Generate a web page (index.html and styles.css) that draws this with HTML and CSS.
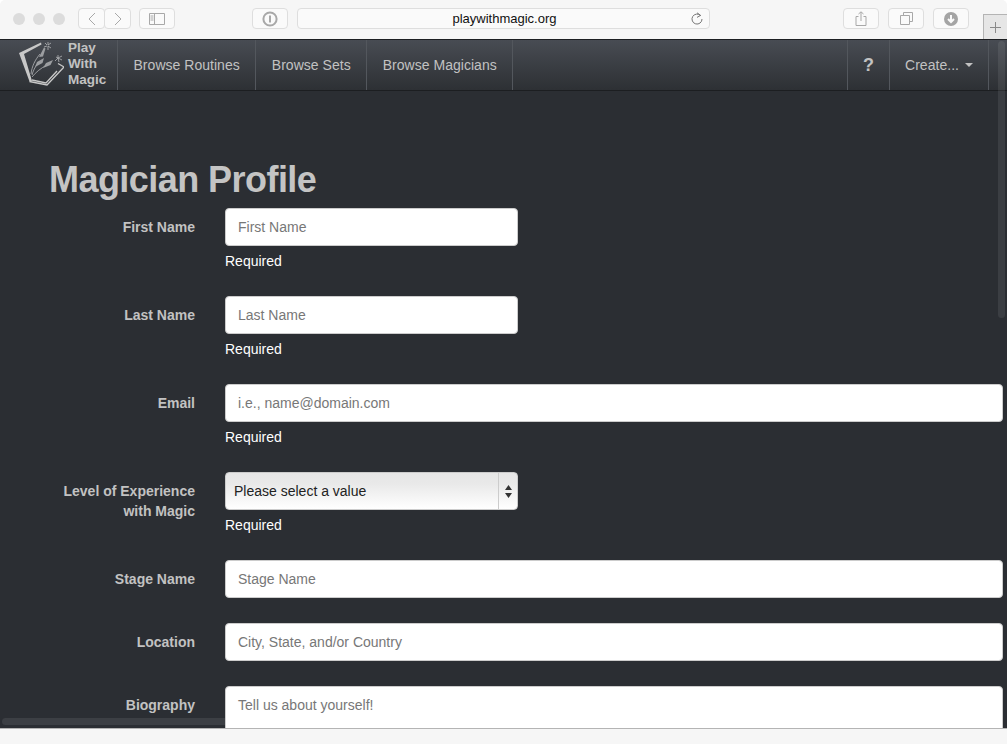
FILE: index.html
```html
<!DOCTYPE html>
<html lang="en">
<head>
  <meta charset="UTF-8">
  <title>Play With Magic</title>
  <link rel="stylesheet" href="styles.css">
</head>
<body>
  <div class="toolbar">
    <div class="lights"><span></span><span></span><span></span></div>
    <div class="btn-pair">
      <button class="tool-btn nav-btn"><svg width="12" height="14" viewBox="0 0 12 14"><path d="M9 1L3 7l6 6" /></svg></button>
      <button class="tool-btn nav-btn"><svg width="12" height="14" viewBox="0 0 12 14"><path d="M3 1l6 6-6 6" /></svg></button>
    </div>
    <button class="tool-btn wide sidebar-btn"><svg width="16" height="12" viewBox="0 0 16 12"><path d="M.5.5h15v11H.5zM5.5.5v11M1.5 3h3M1.5 5h3M1.5 7h3" /></svg></button>
    <button class="tool-btn wide pw-btn"><svg width="16" height="16" viewBox="0 0 16 16"><circle cx="8" cy="8" r="6.6" class="thick" /><path d="M8 4.5v7" class="thick" /></svg></button>
    <div class="url-bar">
      <span class="url-text">playwithmagic.org</span>
      <svg class="reload" width="12" height="14" viewBox="0 0 12 14"><path d="M9.6 3.6A5 5 0 1 0 11 7M6 .8l3.6 2.6L6 5.4" /></svg>
    </div>
    <div class="right-tools">
      <button class="tool-btn wide"><svg width="12" height="15" viewBox="0 0 12 15"><path d="M3.5 5.5H1v9h10v-9H8.500M6 10V1M3.500 3L6 .8 8.500 3" /></svg></button>
      <button class="tool-btn wide"><svg width="13" height="13" viewBox="0 0 13 13"><path d="M.5 3.500h9v9h-9zM3.500 3.500v-3h9v9h-3" /></svg></button>
      <button class="tool-btn wide"><svg width="14" height="14" viewBox="0 0 14 14"><circle cx="7" cy="7" r="7" class="solid" /><path d="M7 3v6.500M4 7l3 3 3-3" class="cut" /></svg></button>
    </div>
    <div class="new-tab"><svg width="11" height="11" viewBox="0 0 11 11"><path d="M5.500 0v11M0 5.500h11" /></svg></div>
  </div>

  <div class="viewport">
    <nav class="navbar">
      <a class="brand" href="#">
        <svg class="logo" width="46" height="50" viewBox="0 0 46 50">
          <path class="logo-cover" d="M1 13L23 2.500l.5 2L6 14l8 27-2.500.5z" />
          <path class="logo-line" d="M11.500 41.500L29 45l17-18-6-3.500M14 40l14 3L39 31" />
          <path class="logo-stem" d="M13 34c1-8 4-14 9-20M14 35c1-4 3-8 6-12M14 37c4-5 9-9 15-12" />
          <path class="logo-cone" d="M21 17l5-9.500 1.500 1-2.500 8zM17 27l2-5 7-4-1.500 5zM25 28l3-5 7-3-2.500 5z" />
          <path class="logo-dots" d="M27 3l2 2M30 2v3M33 3l-3 2M26 7l3-1M30 6v4M33 8l-3-2M38 17l2 1M40 15v3M44 16l-4 2M37 21l3-3M41 22l-1-4M44 20l-4-2" />
        </svg>
        <span class="brand-text">Play<br>With<br>Magic</span>
      </a>
      <a class="nav-link" href="#">Browse Routines</a>
      <a class="nav-link" href="#">Browse Sets</a>
      <a class="nav-link" href="#">Browse Magicians</a>
      <a class="nav-link help" href="#">?</a>
      <a class="nav-link create" href="#">Create... <span class="caret"></span></a>
    </nav>

    <main class="content">
      <h1>Magician Profile</h1>
      <form class="profile-form">
        <label>First Name</label>
        <div class="field narrow">
          <input type="text" placeholder="First Name">
          <p class="help-text">Required</p>
        </div>

        <label>Last Name</label>
        <div class="field narrow">
          <input type="text" placeholder="Last Name">
          <p class="help-text">Required</p>
        </div>

        <label>Email</label>
        <div class="field">
          <input type="text" placeholder="i.e., name@domain.com">
          <p class="help-text">Required</p>
        </div>

        <label>Level of Experience with Magic</label>
        <div class="field narrow">
          <div class="select">
            <span class="select-value">Please select a value</span>
            <span class="select-arrows"><svg width="7" height="13" viewBox="0 0 7 13"><path d="M3.500 0L7 5H0zM3.500 13L0 8h7z" /></svg></span>
          </div>
          <p class="help-text">Required</p>
        </div>

        <label>Stage Name</label>
        <div class="field">
          <input type="text" placeholder="Stage Name">
        </div>

        <label>Location</label>
        <div class="field">
          <input type="text" placeholder="City, State, and/or Country">
        </div>

        <label>Biography</label>
        <div class="field">
          <textarea rows="6" placeholder="Tell us about yourself!"></textarea>
        </div>
      </form>
      <div class="scroll-h"></div>
    </main>
    <div class="scroll-v"></div>
  </div>

  <div class="statusbar"></div>
</body>
</html>
```

FILE: styles.css
```css
html, body { height: 100%; margin: 0; }
html { background: #fff; }
body { display: flex; flex-direction: column; overflow: hidden; font-family: "Liberation Sans", Arial, sans-serif; font-size: 14px; line-height: 20px; }

/* browser window */
.toolbar { position: relative; display: flex; align-items: flex-start; flex: 0 0 39px; box-sizing: border-box; padding-top: 8px; background: #f6f6f6; border-radius: 5px 5px 0 0; }
.lights { display: flex; gap: 8px; margin: 5px 0 0 13px; width: 65px; }
.lights span { width: 12px; height: 12px; border-radius: 50%; background: #dcdcdc; }
.btn-pair { display: flex; margin-right: 8px; }
.tool-btn { display: flex; align-items: center; justify-content: center; box-sizing: border-box; height: 21px; padding: 0; background: #fafafa; border: 1px solid #dedede; border-radius: 4px; }
.nav-btn { width: 27px; }
.nav-btn + .nav-btn { margin-left: -1px; }
.wide { width: 36px; }
.pw-btn { margin-left: 77px; }
.toolbar svg { fill: none; stroke: #a8a8a8; stroke-width: 1; }
.toolbar .thick { stroke-width: 2; }
.toolbar .solid { fill: #a4a4a4; stroke: none; }
.toolbar .cut { stroke: #fafafa; stroke-width: 2; }
.url-bar { position: relative; display: flex; align-items: center; justify-content: center; box-sizing: border-box; width: 413px; height: 21px; margin-left: 9px; background: #fafafa; border: 1px solid #dedede; border-radius: 4px; font-size: 13px; color: #111; }
.url-text { margin: 1px 0 0 2px; }
.toolbar .reload { position: absolute; right: 6px; top: 3px; stroke: #777; }
.right-tools { display: flex; gap: 9px; margin-left: 133px; }
.new-tab { position: absolute; right: 0; bottom: 0; display: flex; align-items: center; justify-content: center; box-sizing: border-box; width: 24px; height: 25px; background: #e6e6e6; border: 1px solid #b4b4b4; border-right: 0; border-bottom: 0; }
.toolbar .new-tab svg { stroke: #8a8a8a; }
.statusbar { flex: 0 0 16px; box-sizing: border-box; background: #f6f6f6; border-top: 1px solid #b4b4b4; }

/* navbar */
.viewport { position: relative; display: flex; flex-direction: column; flex: 1; min-height: 0; }
.navbar { display: flex; flex: 0 0 52px; box-sizing: border-box; height: 52px; padding-right: 18px; background: linear-gradient(to bottom, #484c53, #2d3034); border-top: 1px solid #1c1e21; border-bottom: 1px solid #1c1e21; }
.navbar a { color: #c2c2c2; text-decoration: none; }
.brand { display: flex; align-items: center; box-sizing: border-box; width: 118px; padding-left: 18px; border-right: 1px solid #53575d; }
.logo { flex: none; margin-right: 4px; }
.logo-cover { fill: #c8c8c8; }
.logo-cone { fill: #9c9ea1; }
.logo-line { fill: none; stroke: #c8c8c8; stroke-width: 1.300; }
.logo-stem { fill: none; stroke: #b4b5b7; stroke-width: .8; }
.logo-dots { fill: none; stroke: #b4b5b7; stroke-width: .8; }
.brand-text { margin-top: -3px; font-size: 13.5px; font-weight: bold; line-height: 16px; }
.nav-link { display: flex; align-items: center; padding: 0 15.5px; border-right: 1px solid #53575d; letter-spacing: .03px; }
.help { margin-left: auto; padding: 0 15px; border-left: 1px solid #53575d; font-size: 18px; font-weight: bold; }
.create { padding: 0 15px; }
.caret { display: inline-block; width: 0; height: 0; margin-left: 6px; border-top: 4px solid #c2c2c2; border-left: 4px solid transparent; border-right: 4px solid transparent; }

/* page */
.content { position: relative; flex: 1; min-height: 0; overflow: hidden; padding: 0 4px 0 0; background: #2b2e33; }
h1 { margin: 68px 0 8px 49px; font-size: 36px; line-height: 41px; font-weight: bold; letter-spacing: -.55px; color: #c4c4c4; }
.profile-form { display: grid; grid-template-columns: 195px 1fr; column-gap: 30px; }
.profile-form label { padding-top: 9px; text-align: right; font-weight: bold; color: #c2c2c2; padding-left: 50px; }
.field { position: relative; z-index: 1; margin-bottom: 25px; }
.narrow { width: 293px; }
input, textarea { display: block; box-sizing: border-box; width: 100%; height: 38px; padding: 8px 12px; font: inherit; color: #555; background: #fff; border: 1px solid #ccc; border-radius: 4px; }
textarea { height: 130px; resize: none; }
input::placeholder, textarea::placeholder { color: #777; opacity: 1; }
.help-text { margin: 5px 0 0; color: #fff; }
.select { display: flex; align-items: center; justify-content: space-between; box-sizing: border-box; height: 38px; padding-left: 8px; color: #222; background: linear-gradient(to bottom, #e6e6e6, #e9e9e9 30%, #fff); border: 1px solid #ccc; border-radius: 4px; }
.select-arrows { display: flex; align-items: center; justify-content: center; align-self: stretch; box-sizing: border-box; width: 19px; border-left: 1px solid #ccc; }
.select-arrows svg { fill: #333; }

/* overlay scrollbars */
.scroll-v { position: absolute; top: 2px; right: 2px; width: 7px; height: 277px; border-radius: 4px; background: rgba(255, 255, 255, .08); }
.scroll-h { position: absolute; left: 2px; bottom: 3px; width: 400px; height: 7px; border-radius: 4px; background: #3c3f44; }
```
